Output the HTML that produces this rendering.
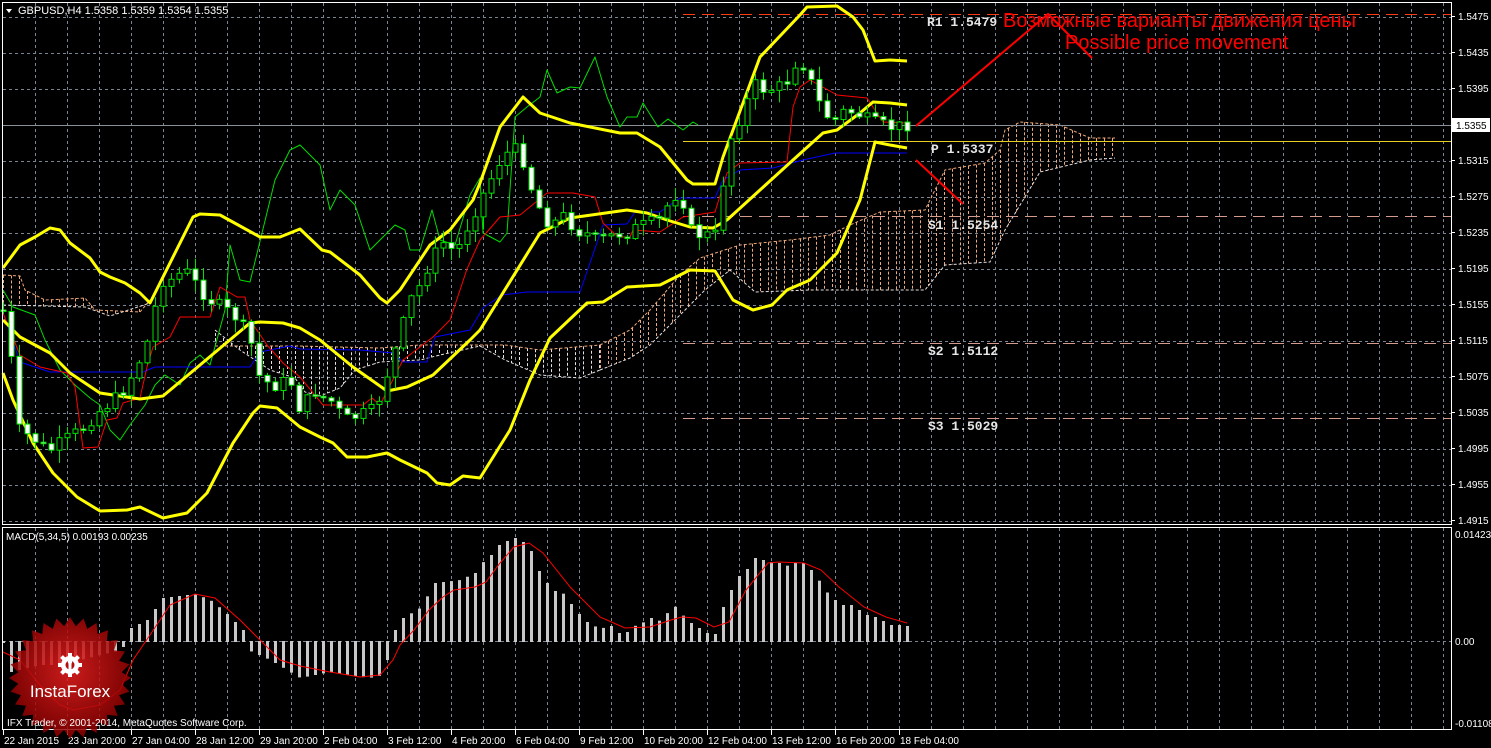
<!DOCTYPE html>
<html><head><meta charset="utf-8">
<style>
html,body{margin:0;padding:0;background:#000;}
body{width:1491px;height:748px;overflow:hidden;position:relative;}
svg{position:absolute;left:0;top:0;}
</style></head>
<body>
<svg id="s" width="1491" height="748" xmlns="http://www.w3.org/2000/svg" font-family="Liberation Sans, sans-serif">
<rect width="1491" height="748" fill="#000"/>
<g id="grid"></g>
<g id="cloud"></g>
<g id="levels">
 <line x1="683" y1="14.5" x2="1451" y2="14.5" stroke="#ff3c14" stroke-width="1" stroke-dasharray="12,7"/>
 <line x1="683" y1="216.5" x2="1451" y2="216.5" stroke="#d49a8c" stroke-width="1" stroke-dasharray="12,7"/>
 <line x1="683" y1="343.5" x2="1451" y2="343.5" stroke="#d49a8c" stroke-width="1" stroke-dasharray="12,7"/>
 <line x1="683" y1="418.5" x2="1451" y2="418.5" stroke="#d49a8c" stroke-width="1" stroke-dasharray="12,7"/>
 <line x1="2" y1="125.5" x2="1451" y2="125.5" stroke="#8a9098" stroke-width="1"/>
 <line x1="683" y1="141.5" x2="1451" y2="141.5" stroke="#e8d020" stroke-width="1"/>
</g>
<g id="lines" fill="none"></g>
<g id="candles"></g>
<g id="macd"></g>
<g id="txt" font-family="Liberation Mono, monospace" font-weight="bold" font-size="13" fill="#e6e6e6">
 <text x="927" y="26">R1 1.5479</text>
 <text x="931" y="153">P 1.5337</text>
 <text x="928" y="229">S1 1.5254</text>
 <text x="928" y="355">S2 1.5112</text>
 <text x="928" y="430">S3 1.5029</text>
</g>
<polyline points="916,126 1048,14 1092,58" fill="none" stroke="#ff0000" stroke-width="2"/>
<line x1="916" y1="160" x2="963" y2="204" stroke="#ff0000" stroke-width="2"/>
<text x="1003" y="27" font-size="20" fill="#ff0000" font-family="Liberation Sans, 'Noto Sans CJK SC', sans-serif">Возможные варианты движения цены</text>
<text x="1065" y="49" font-size="20" fill="#ff0000">Possible price movement</text>
<g stroke="#fff" stroke-width="1" fill="none">
 <rect x="2.5" y="2.5" width="1449" height="522"/>
 <rect x="2.5" y="527.5" width="1449" height="202"/>
</g>
<g id="axis" font-size="10" fill="#fff"></g>
<polygon points="6,9 12,9 9,13" fill="#fff"/>
<text x="18" y="14" font-size="11" fill="#fff">GBPUSD,H4  1.5358 1.5359 1.5354 1.5355</text>
<text x="6" y="540" font-size="10" fill="#fff">MACD(5,34,5) 0.00193 0.00235</text>
<defs><radialGradient id="rg" cx="50%" cy="45%" r="55%"><stop offset="0" stop-color="#ee2020"/><stop offset="1" stop-color="#8a0000"/></radialGradient></defs>
<polygon id="star" fill="url(#rg)" opacity="0.85"/>
<g fill="#fff" transform="translate(70,665)">
 <circle r="9"/>
 <g id="teeth"></g>
 <circle r="4.5" fill="#b01010"/>
 <rect x="-1.5" y="-2" width="3" height="10" fill="#fff"/>
 <circle r="2.2" cy="-3" fill="#fff"/>
</g>
<text x="70" y="697" font-size="17" fill="#fff" text-anchor="middle">InstaForex</text>
<text x="7" y="726" font-size="10" fill="#fff">IFX Trader, © 2001-2014, MetaQuotes Software Corp.</text>
</svg>
<script>
(function(){
var NS="http://www.w3.org/2000/svg";
function el(p,t,a){var e=document.createElementNS(NS,t);for(var k in a)e.setAttribute(k,a[k]);p.appendChild(e);return e;}
function G(id){return document.getElementById(id);}
function interp(pts,x){if(x<=pts[0][0])return pts[0][1];for(var i=1;i<pts.length;i++){if(x<=pts[i][0]){var a=pts[i-1],b=pts[i];return a[1]+(b[1]-a[1])*(x-a[0])/(b[0]-a[0]);}}return pts[pts.length-1][1];}
function P(a){return a.map(function(p){return p[0]+","+p[1]}).join(" ");}
var g=G("grid");
for(var x=35;x<1451;x+=32){el(g,"line",{x1:x+.5,y1:3,x2:x+.5,y2:524,stroke:"#7a8594","stroke-dasharray":"3,3"});el(g,"line",{x1:x+.5,y1:528,x2:x+.5,y2:729,stroke:"#7a8594","stroke-dasharray":"3,3"});}
for(var y=17;y<524;y+=36){el(g,"line",{x1:3,y1:y+.5,x2:1451,y2:y+.5,stroke:"#7a8594","stroke-dasharray":"3,3"});}
el(g,"line",{x1:3,y1:641.5,x2:1451,y2:641.5,stroke:"#7a8594","stroke-dasharray":"3,3"});
var ax=G("axis");
var labs=["1.5475","1.5435","1.5395","1.5355","1.5315","1.5275","1.5235","1.5195","1.5155","1.5115","1.5075","1.5035","1.4995","1.4955","1.4915"];
labs.forEach(function(l,i){var yy=16+36*i;el(ax,"line",{x1:1451,y1:yy+.5,x2:1455,y2:yy+.5,stroke:"#fff"});if(l!="1.5355"){var tt=el(ax,"text",{x:1458,y:yy+4});tt.textContent=l;}});
el(ax,"rect",{x:1452,y:118,width:38,height:14,fill:"#fff"});
var tx=el(ax,"text",{x:1456,y:129,fill:"#000"});tx.textContent="1.5355";
[["0.01423",538],["0.00",645],["-0.01108",727]].forEach(function(a){var tt=el(ax,"text",{x:1455,y:a[1]});tt.textContent=a[0];});
var dl=["22 Jan 2015","23 Jan 20:00","27 Jan 04:00","28 Jan 12:00","29 Jan 20:00","2 Feb 04:00","3 Feb 12:00","4 Feb 20:00","6 Feb 04:00","9 Feb 12:00","10 Feb 20:00","12 Feb 04:00","13 Feb 12:00","16 Feb 20:00","18 Feb 04:00"];
dl.forEach(function(l,i){var xx=3+64*i;el(ax,"line",{x1:xx+.5,y1:730,x2:xx+.5,y2:735,stroke:"#fff"});var tt=el(ax,"text",{x:xx+1,y:744});tt.textContent=l;});
var cg=G("cloud");
function cloud(tp,bt,x0,x1,col2){
 for(var xx=x0;xx<=x1;xx+=8){var a=interp(tp,xx),b=interp(bt,xx);el(cg,"line",{x1:xx+.5,y1:a,x2:xx+.5,y2:b,stroke:col2||"#f0a878","stroke-dasharray":"3,2"});}
 el(cg,"polyline",{points:P(tp),fill:"none",stroke:"#f0a878","stroke-dasharray":"3,2"});
 el(cg,"polyline",{points:P(bt),fill:"none",stroke:"#e8e0e0","stroke-dasharray":"3,2"});
}
cloud([[3,275],[20,276],[25,290],[45,300],[85,298],[95,310],[140,312],[150,300]],[[3,305],[85,307],[110,316],[150,303]],3,150);
cloud([[215,346],[300,346],[380,348],[420,345],[480,345],[505,345],[540,350],[600,345]],[[215,330],[240,350],[270,370],[295,378],[305,392],[320,396],[340,388],[355,370],[380,362],[420,360],[440,355],[480,346],[505,360],[540,375],[580,378],[600,370]],215,600,"#e8e0e0");
cloud([[600,345],[630,330],[650,310],[680,275],[700,258],[740,245],[790,240],[830,235],[850,225],[880,212],[925,210],[945,170],[985,163],[1000,150],[1005,130],[1020,122],[1060,125],[1090,138],[1115,138]],
      [[600,370],[630,358],[650,345],[680,315],[705,290],[730,270],[755,292],[810,290],[925,290],[945,265],[990,262],[1005,230],[1040,172],[1090,160],[1115,158]],600,1115);
var lg=G("lines");
function pl(c,w,pts){el(lg,"polyline",{points:P(pts),stroke:c,"stroke-width":w,"stroke-linejoin":"round"});}
pl("#00dd00",1,[[3,290],[13,307],[35,315],[45,340],[60,370],[75,385],[90,398],[100,405],[110,430],[120,440],[130,425],[145,405],[155,385],[165,375],[180,385],[190,363],[200,355],[210,365],[225,310],[230,245],[240,280],[250,282],[275,180],[290,150],[300,145],[320,165],[330,210],[340,190],[355,205],[370,250],[395,225],[405,230],[410,250],[420,250],[432,210],[440,240],[455,245],[470,195],[480,178],[483,233],[500,242],[507,233],[515,117],[527,107],[540,97],[547,70],[557,93],[570,87],[580,88],[595,57],[607,97],[620,127],[627,117],[637,117],[643,103],[658,127],[668,119],[683,130],[693,122],[698,125]]);
pl("#0000ff",1,[[3,313],[20,362],[50,372],[143,372],[155,367],[250,367],[260,352],[290,346],[300,349],[360,350],[393,353],[403,362],[427,362],[435,337],[470,330],[483,308],[502,295],[527,292],[580,292],[590,263],[603,225],[627,224],[635,212],[660,212],[680,198],[715,198],[723,180],[740,170],[773,168],[803,160],[835,153],[907,153]]);
pl("#ff0000",1,[[3,313],[20,355],[40,367],[67,373],[75,387],[83,448],[98,447],[107,420],[117,418],[123,403],[140,398],[147,367],[153,347],[170,337],[180,317],[210,317],[220,287],[237,297],[245,297],[250,320],[267,345],[283,363],[300,377],[323,405],[363,405],[372,398],[380,405],[403,360],[433,337],[450,320],[467,269],[480,240],[500,217],[520,215],[547,193],[573,193],[595,197],[603,223],[618,237],[630,237],[633,230],[660,232],[683,217],[715,212],[727,173],[740,163],[787,162],[793,107],[800,87],[810,80],[837,95],[867,98],[883,122],[907,123]]);
var Y="#ffff00";
pl(Y,3,[[3,268],[20,245],[35,237],[50,228],[60,230],[70,243],[90,258],[100,272],[110,277],[125,283],[140,293],[150,303],[193,217],[200,214],[220,215],[260,237],[280,237],[300,229],[322,250],[330,252],[360,275],[380,298],[387,303],[400,290],[430,245],[450,230],[473,200],[480,183],[500,127],[523,97],[540,113],[570,123],[620,133],[637,133],[660,147],[687,180],[693,184],[715,184],[723,157],[760,57],[800,15],[807,7],[837,6],[853,17],[863,30],[875,61],[890,60],[907,61]]);
pl(Y,3,[[3,320],[20,337],[50,353],[70,373],[100,393],[140,399],[163,396],[200,365],[250,323],[260,322],[283,323],[300,328],[320,340],[353,367],[387,391],[407,387],[433,375],[470,340],[480,330],[540,233],[570,218],[627,210],[647,213],[667,220],[690,227],[713,228],[727,220],[760,190],[793,160],[823,133],[837,130],[860,113],[873,102],[890,103],[907,105]]);
pl(Y,3,[[3,373],[13,400],[33,443],[53,473],[77,497],[100,511],[127,510],[140,507],[163,518],[187,513],[207,493],[233,443],[253,413],[260,406],[277,408],[300,427],[320,437],[333,443],[347,457],[367,457],[387,453],[400,460],[427,473],[437,483],[450,485],[463,476],[480,478],[510,430],[530,380],[550,338],[587,303],[603,302],[627,287],[660,285],[690,270],[715,271],[733,300],[753,310],[772,305],[787,290],[810,280],[837,253],[860,200],[875,142],[890,145],[907,148]]);
var path=[[3,310],[11,360],[19,430],[35,440],[50,450],[65,440],[80,430],[100,410],[120,395],[135,370],[150,335],[160,280],[170,280],[185,270],[200,290],[210,300],[225,310],[240,320],[250,340],[260,380],[275,385],[290,380],[300,410],[315,390],[330,400],[345,420],[360,415],[375,410],[385,380],[395,350],[410,300],[420,285],[430,260],[445,240],[455,255],[470,220],[480,200],[490,180],[500,160],[510,150],[520,150],[530,185],[540,210],[550,225],[565,215],[575,230],[590,235],[600,240],[615,235],[630,230],[645,225],[660,220],[670,200],[680,190],[690,230],[700,235],[715,235],[720,200],[730,140],[745,105],[755,85],[765,90],[775,88],[785,85],[795,63],[805,65],[815,95],[825,115],[835,120],[845,110],[860,115],[870,122],[880,125],[895,128],[907,124]];
var seed=7;function rnd(){seed=(seed*9301+49297)%233280;return seed/233280;}
var cd=G("candles");var prev=interp(path,3);
for(var i=0;i<=113;i++){var cx=3+8*i;var c=interp(path,cx)+(rnd()-0.5)*14;var o=prev;if(Math.abs(c-o)<1.5)c=o+1.5;
 var bTop=Math.min(o,c),bBot=Math.max(o,c);var hi=bTop-rnd()*12-1,lo=bBot+rnd()*12+1;
 el(cd,"line",{x1:cx+.5,y1:hi,x2:cx+.5,y2:lo,stroke:"#00e000"});
 el(cd,"rect",{x:cx-2,y:bTop,width:5,height:bBot-bTop,fill:(c>o?"#fff":"#000"),stroke:"#00e000","stroke-width":1});
 prev=c;}
var mg=G("macd");
var mk=[[3,643],[11,672],[19,670],[40,665],[60,665],[80,660],[100,655],[122,650],[125,641],[131,628],[147,620],[163,598],[195,594],[210,600],[225,612],[243,630],[247,641],[250,651],[270,660],[300,678],[330,672],[360,677],[378,678],[387,660],[391,641],[395,630],[403,618],[420,608],[435,583],[460,580],[475,573],[482,563],[491,555],[499,545],[507,541],[515,538],[523,542],[531,551],[539,571],[547,583],[555,591],[564,594],[571,604],[579,614],[587,622],[596,627],[604,628],[611,626],[619,633],[627,632],[636,625],[644,622],[651,618],[660,621],[668,612],[676,606],[684,617],[691,623],[699,628],[707,633],[715,634],[723,607],[731,590],[739,576],[747,569],[755,558],[763,560],[771,562],[779,563],[788,566],[795,563],[804,563],[811,570],[820,582],[828,594],[835,600],[843,605],[851,605],[859,610],[867,615],[875,617],[883,621],[891,625],[899,625],[907,626]];
for(var j=0;j<=113;j++){var bx=3+8*j;var v=interp(mk,bx);var a=Math.min(v,641),b=Math.max(v,642);el(mg,"rect",{x:bx-1,y:a,width:3,height:Math.max(1,b-a),fill:"#c8c8c8"});}
el(mg,"polyline",{points:P([[3,652],[20,660],[40,685],[60,705],[73,710],[100,705],[120,690],[133,660],[150,635],[170,605],[195,594],[215,598],[240,620],[260,640],[280,660],[300,666],[330,672],[360,677],[380,675],[393,660],[400,645],[414,630],[429,610],[443,597],[454,590],[475,587],[486,582],[500,563],[514,547],[529,543],[543,553],[571,588],[600,617],[625,628],[650,627],[671,620],[682,617],[696,618],[714,627],[729,622],[746,590],[768,563],[779,562],[804,563],[821,570],[839,587],[864,607],[886,617],[907,623]]),fill:"none",stroke:"#ff0000","stroke-width":1});
var pts=[];for(var k=0;k<56;k++){var r=k%2?52:61;var an=Math.PI*2*k/56;pts.push([(70+r*Math.cos(an)).toFixed(1),(678+r*Math.sin(an)).toFixed(1)]);}
G("star").setAttribute("points",P(pts));
var th=G("teeth");for(var q=0;q<8;q++){el(th,"rect",{x:-2,y:-12,width:4,height:5,fill:"#fff",transform:"rotate("+(q*45)+")"});}
})();
</script>
</body></html>
